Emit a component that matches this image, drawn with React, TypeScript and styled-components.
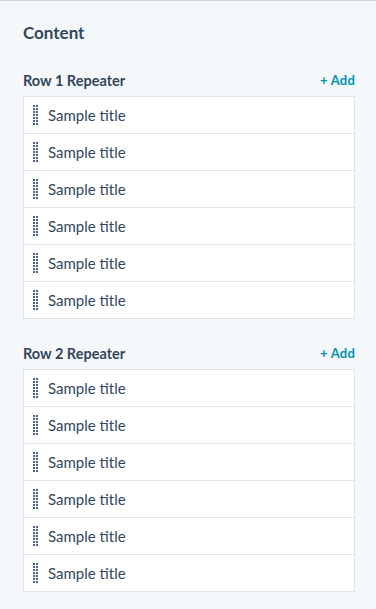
import styled, { createGlobalStyle } from 'styled-components';

const GlobalStyle = createGlobalStyle`
  html, body {
    margin: 0;
    padding: 0;
    background: #f5f8fa;
  }
  body {
    font-family: Lato, "Noto Sans", sans-serif;
    color: #33475b;
  }
`;

const Panel = styled.div`
  border-top: 1px solid #cbd6e2;
  padding: 21px 21px 17px 23px;
  min-height: 609px;
  box-sizing: border-box;
`;

const Heading = styled.h2`
  margin: 0 0 26px;
  font-size: 17px;
  line-height: 22px;
  font-weight: 700;
  color: #33475b;
`;

const Section = styled.section`
  & + & {
    margin-top: 24px;
  }
`;

const SectionHeader = styled.div`
  display: flex;
  align-items: center;
  justify-content: space-between;
  height: 20px;
  margin-bottom: 6px;
`;

const SectionTitle = styled.h3`
  margin: 0;
  font-size: 14.5px;
  font-weight: 700;
  color: #33475b;
`;

const AddButton = styled.button`
  border: none;
  background: none;
  padding: 0;
  font-family: inherit;
  font-size: 13px;
  font-weight: 700;
  letter-spacing: 0.2px;
  color: #0091ae;
  cursor: pointer;
`;

const List = styled.ul`
  list-style: none;
  margin: 0;
  padding: 0;
  background: #fff;
  border: 1px solid #dfe3eb;
`;

const Item = styled.li`
  display: flex;
  align-items: center;
  height: 36px;
  padding-left: 9px;
  & + & {
    border-top: 1px solid #dfe3eb;
  }
`;

const Grip = styled.span`
  display: grid;
  grid-template-columns: repeat(2, 2px);
  grid-auto-rows: 2px;
  gap: 1px;
  margin-right: 10px;
  span {
    background: #4a6485;
  }
`;

const ItemTitle = styled.span`
  font-size: 15px;
  color: #33475b;
`;

const DragGrip = () => (
  <Grip>
    {Array.from({ length: 14 }).map((_, i) => (
      <span key={i} />
    ))}
  </Grip>
);

const repeaters = ['Row 1 Repeater', 'Row 2 Repeater'];

export default function App() {
  return (
    <>
      <GlobalStyle />
      <Panel>
        <Heading>Content</Heading>
        {repeaters.map((name) => (
          <Section key={name}>
            <SectionHeader>
              <SectionTitle>{name}</SectionTitle>
              <AddButton>+ Add</AddButton>
            </SectionHeader>
            <List>
              {Array.from({ length: 6 }).map((_, i) => (
                <Item key={i}>
                  <DragGrip />
                  <ItemTitle>Sample title</ItemTitle>
                </Item>
              ))}
            </List>
          </Section>
        ))}
      </Panel>
    </>
  );
}
